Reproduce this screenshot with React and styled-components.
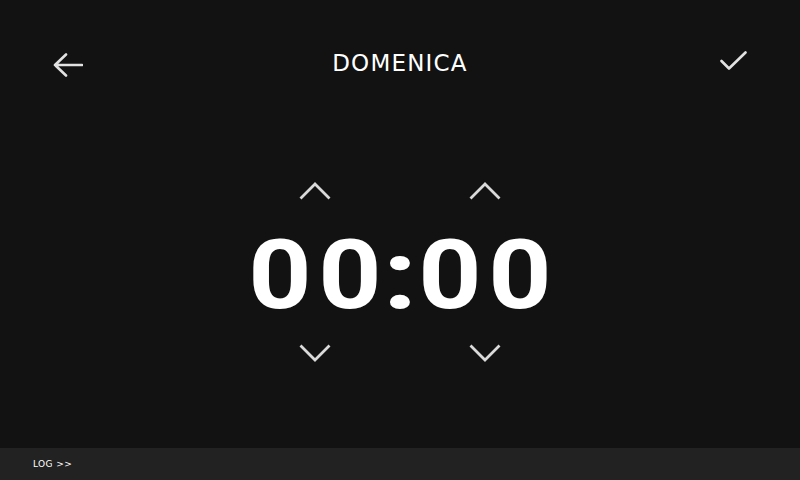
import React, { useState } from 'react'
import styled, { createGlobalStyle } from 'styled-components'

const GlobalStyle = createGlobalStyle`
    html, body {
        margin: 0;
        padding: 0;
        background: #121212;
    }
    body {
        font-family: "DejaVu Sans", "Liberation Sans", sans-serif;
    }
`

const BackIcon = () => (
    <svg width="31" height="24" viewBox="0 0 31 24" fill="none">
        <path d="M30 12 H3 M14 1.5 L3 12 L14 22.5" stroke="#e2e2e2" strokeWidth="2.6" strokeLinecap="round" strokeLinejoin="round" />
    </svg>
)

const CheckIcon = () => (
    <svg width="27" height="20" viewBox="0 0 27 20" fill="none">
        <path d="M1.5 10 L9 17.5 L25.5 1.5" stroke="#e2e2e2" strokeWidth="2.6" strokeLinecap="round" strokeLinejoin="round" />
    </svg>
)

const Chevron = ({ down }) => (
    <svg width="32" height="18" viewBox="0 0 32 18" fill="none">
        {down
            ? <path d="M1.5 1.5 L16 16 L30.5 1.5" stroke="#dadada" strokeWidth="2.8" />
            : <path d="M1.5 16.5 L16 2 L30.5 16.5" stroke="#dadada" strokeWidth="2.8" />}
    </svg>
)

const pad = (n) => String(n).padStart(2, '0')

const TimeColumn = ({ value, onUp, onDown }) => (
    <Column>
        <ArrowButton onClick={onUp}><Chevron /></ArrowButton>
        <Digits>
            {pad(value).split('').map((d, i) => <Digit key={i}>{d}</Digit>)}
        </Digits>
        <ArrowButton $down onClick={onDown}><Chevron down /></ArrowButton>
    </Column>
)

const App = () => {
    const [hours, setHours] = useState(0)
    const [minutes, setMinutes] = useState(0)

    return (
        <>
            <GlobalStyle />
            <Screen>
                <Header>
                    <IconButton $offset="2px"><BackIcon /></IconButton>
                    <Title>DOMENICA</Title>
                    <IconButton $offset="-6px" $right><CheckIcon /></IconButton>
                </Header>

                <Clock>
                    <TimeColumn
                        value={hours}
                        onUp={() => setHours((hours + 1) % 24)}
                        onDown={() => setHours((hours + 23) % 24)}
                    />
                    <Colon>:</Colon>
                    <TimeColumn
                        value={minutes}
                        onUp={() => setMinutes((minutes + 1) % 60)}
                        onDown={() => setMinutes((minutes + 59) % 60)}
                    />
                </Clock>

                <Footer>
                    <LogLink>LOG &gt;&gt;</LogLink>
                </Footer>
            </Screen>
        </>
    )
}

export default App


const Screen = styled.div`
    width: 800px;
    height: 480px;
    display: flex;
    flex-direction: column;
    background: #121212;
    overflow: hidden;
`
const Header = styled.div`
    height: 48px;
    margin-top: 40px;
    padding: 0 52px;
    display: grid;
    grid-template-columns: 1fr auto 1fr;
    align-items: center;
`
const IconButton = styled.div`
    display: flex;
    justify-content: ${(props) => props.$right ? 'flex-end' : 'flex-start'};
    margin-top: ${(props) => props.$offset};
    margin-right: ${(props) => props.$right ? '1px' : '0'};
    cursor: pointer;
`
const Title = styled.div`
    color: #ffffff;
    font-family: "DejaVu Sans", sans-serif;
    font-size: 23px;
    letter-spacing: 1.2px;
    line-height: 1;
    margin-top: -2px;
`

//*************************** */

const Clock = styled.div`
    margin-top: 94px;
    display: flex;
    justify-content: center;
    align-items: flex-start;
    gap: 16px;
`
const Column = styled.div`
    display: flex;
    flex-direction: column;
    align-items: center;
`
const ArrowButton = styled.div`
    display: flex;
    height: 18px;
    margin-top: ${(props) => props.$down ? '21px' : '0'};
    margin-bottom: ${(props) => props.$down ? '0' : '27px'};
    cursor: pointer;
`
const Digits = styled.div`
    display: flex;
    gap: 16px;
`
const Digit = styled.span`
    width: 54px;
    display: flex;
    justify-content: center;
    color: #ffffff;
    font-family: Roboto, "Liberation Sans", sans-serif;
    font-weight: 700;
    font-size: 96px;
    line-height: 1;
    transform: scaleX(1.15);
`
const Colon = styled(Digit)`
    width: 14px;
    margin-top: 45px;
    transform: scale(1.3, 1);
`

//*************************** */

const Footer = styled.div`
    margin-top: auto;
    height: 32px;
    background: #222222;
    display: flex;
    align-items: center;
    padding-left: 33px;
`
const LogLink = styled.span`
    color: #ffffff;
    font-family: "DejaVu Sans", sans-serif;
    font-size: 9px;
    letter-spacing: 0.4px;
    cursor: pointer;
`
